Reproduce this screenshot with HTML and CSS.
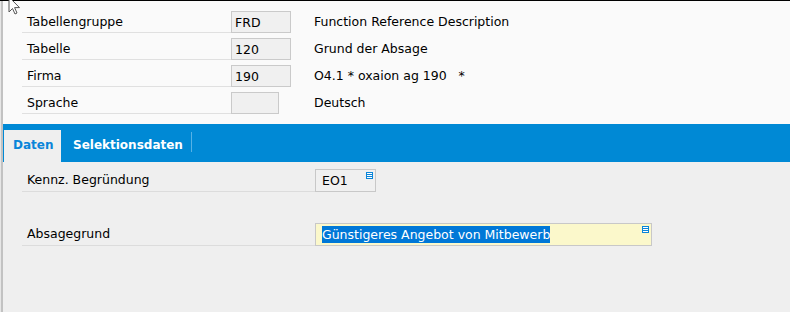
FILE: index.html
```html
<!DOCTYPE html>
<html>
  <head>
    <meta charset="utf-8">
    <title>Grund der Absage</title>
    <link rel="stylesheet" href="styles.css">
  </head>
  <body>
    <div class="frame">
      <div class="edge"></div>
      <div class="main">
        <div class="head">
          <div class="row">
            <div class="label">Tabellengruppe</div>
            <div class="field">FRD</div>
            <div class="desc">Function Reference Description</div>
          </div>
          <div class="row">
            <div class="label">Tabelle</div>
            <div class="field">120</div>
            <div class="desc">Grund der Absage</div>
          </div>
          <div class="row">
            <div class="label">Firma</div>
            <div class="field">190</div>
            <div class="desc">O4.1 * oxaion ag 190   *</div>
          </div>
          <div class="row">
            <div class="label">Sprache</div>
            <div class="field short"></div>
            <div class="desc">Deutsch</div>
          </div>
        </div>

        <div class="tabs">
          <div class="tab active">Daten</div>
          <div class="tab">Selektionsdaten</div>
          <div class="tab-sep"></div>
        </div>

        <div class="body">
          <div class="brow">
            <div class="label">Kennz. Begründung</div>
            <div class="input small">EO1
              <svg class="f4" width="7" height="7" viewBox="0 0 7 7"><rect width="7" height="7" fill="#0a85d9"/><rect x="1" y="1" width="5" height="1" fill="#fff"/><rect x="1" y="3" width="5" height="1" fill="#fff"/><rect x="1" y="5" width="5" height="1" fill="#fff"/></svg>
            </div>
          </div>
          <div class="brow second">
            <div class="label">Absagegrund</div>
            <div class="input wide"><span class="sel">Günstigeres Angebot von Mitbewerb</span>
              <svg class="f4" width="7" height="7" viewBox="0 0 7 7"><rect width="7" height="7" fill="#0a85d9"/><rect x="1" y="1" width="5" height="1" fill="#fff"/><rect x="1" y="3" width="5" height="1" fill="#fff"/><rect x="1" y="5" width="5" height="1" fill="#fff"/></svg>
            </div>
          </div>
        </div>
      </div>
    </div>

    <svg class="cursor" width="14" height="20" viewBox="0 0 14 20">
      <path d="M1 0 L1 15 L4.5 11.5 L7 17 L9 16 L6.6 10.6 L11.5 10.6 Z" fill="#fff" stroke="#555" stroke-width="1"/>
    </svg>
  </body>
</html>
```

FILE: styles.css
```css
body { margin: 0; background: #efefef; font-family: "DejaVu Sans", Verdana, sans-serif; font-size: 12.5px; color: #000; }

.frame { display: flex; border-top: 1px solid #000; height: 311px; }
.edge { width: 1px; background: #e6e6e6; border-right: 2px solid #c2c2c2; }
.main { flex: 1; display: flex; flex-direction: column; }

/* kopfbereich */
.head { background: #fafafa; padding: 10px 0 10px 19px; display: flex; flex-direction: column; gap: 5px; }
.row { display: flex; align-items: stretch; height: 22px; }
.row .label { width: 204px; padding-left: 5px; border-bottom: 1px solid #e0e0e0; line-height: 22px; }
.field { width: 55px; background: #f0f0f0; border: 1px solid #cacaca; padding-left: 3px; line-height: 21px; }
.field.short { width: 43px; margin-right: 12px; }
.desc { margin-left: 23px; line-height: 22px; white-space: pre; }

/* reiter */
.tabs { background: #0089d5; height: 38px; display: flex; align-items: flex-end; padding-left: 1px; }
.tab { height: 32px; line-height: 30px; font-size: 12px; font-weight: bold; color: #fff; padding: 0 8px 0 12px; }
.tab.active { background: #efefef; color: #0a85d9; padding: 0 9px; width: 39px; }
.tab-sep { width: 1px; height: 20px; background: #56b2e6; margin-bottom: 10px; }

/* datenbereich */
.body { padding: 7px 0 0 19px; display: flex; flex-direction: column; gap: 31px; }
.brow { display: flex; height: 23px; }
.brow .label { width: 288px; padding-left: 5px; border-bottom: 1px solid #dcdcdc; line-height: 22px; }
.input { position: relative; border: 1px solid #c8c8c8; background: #f0f0f0; padding-left: 6px; line-height: 21px; }
.input.small { width: 53px; }
.input.wide { width: 329px; background: #fbf8cb; }
.sel { background: #0078d7; color: #fff; padding: 1px 0; }
.f4 { position: absolute; top: 2px; right: 2px; }

.cursor { position: absolute; left: 8px; top: -3px; }
```
